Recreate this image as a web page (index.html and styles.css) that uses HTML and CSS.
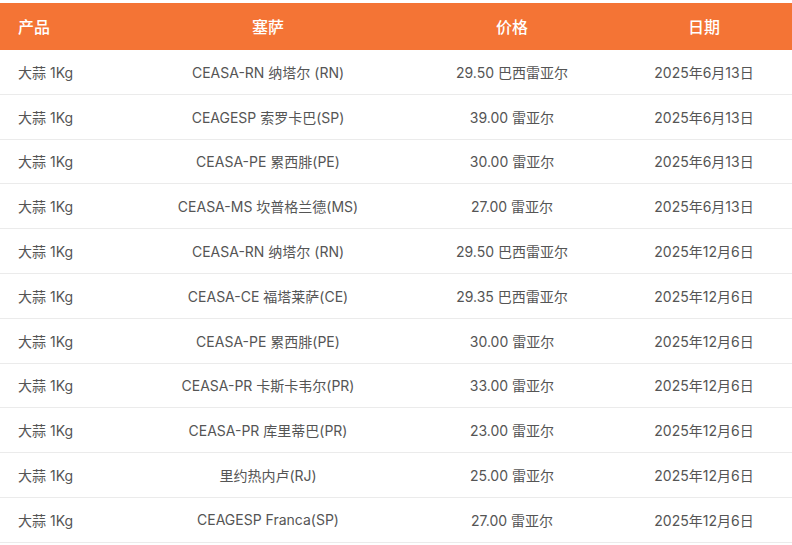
FILE: index.html
```html
<!DOCTYPE html>
<html lang="zh">
<head>
<meta charset="utf-8">
<link rel="stylesheet" href="styles.css">
</head>
<body>
<table class="prices">
  <colgroup>
    <col class="c1"><col class="c2"><col class="c3"><col class="c4">
  </colgroup>
  <thead>
    <tr><th class="left">产品</th><th>塞萨</th><th>价格</th><th>日期</th></tr>
  </thead>
  <tbody>
    <tr><td class="left">大蒜 1Kg</td><td>CEASA-RN 纳塔尔 (RN)</td><td>29.50 巴西雷亚尔</td><td>2025年6月13日</td></tr>
    <tr><td class="left">大蒜 1Kg</td><td>CEAGESP 索罗卡巴(SP)</td><td>39.00 雷亚尔</td><td>2025年6月13日</td></tr>
    <tr><td class="left">大蒜 1Kg</td><td>CEASA-PE 累西腓(PE)</td><td>30.00 雷亚尔</td><td>2025年6月13日</td></tr>
    <tr><td class="left">大蒜 1Kg</td><td>CEASA-MS 坎普格兰德(MS)</td><td>27.00 雷亚尔</td><td>2025年6月13日</td></tr>
    <tr><td class="left">大蒜 1Kg</td><td>CEASA-RN 纳塔尔 (RN)</td><td>29.50 巴西雷亚尔</td><td>2025年12月6日</td></tr>
    <tr><td class="left">大蒜 1Kg</td><td>CEASA-CE 福塔莱萨(CE)</td><td>29.35 巴西雷亚尔</td><td>2025年12月6日</td></tr>
    <tr><td class="left">大蒜 1Kg</td><td>CEASA-PE 累西腓(PE)</td><td>30.00 雷亚尔</td><td>2025年12月6日</td></tr>
    <tr><td class="left">大蒜 1Kg</td><td>CEASA-PR 卡斯卡韦尔(PR)</td><td>33.00 雷亚尔</td><td>2025年12月6日</td></tr>
    <tr><td class="left">大蒜 1Kg</td><td>CEASA-PR 库里蒂巴(PR)</td><td>23.00 雷亚尔</td><td>2025年12月6日</td></tr>
    <tr><td class="left">大蒜 1Kg</td><td>里约热内卢(RJ)</td><td>25.00 雷亚尔</td><td>2025年12月6日</td></tr>
    <tr><td class="left">大蒜 1Kg</td><td>CEAGESP Franca(SP)</td><td>27.00 雷亚尔</td><td>2025年12月6日</td></tr>
  </tbody>
</table>
</body>
</html>
```
FILE: styles.css
```css
html, body {
  margin: 0;
  padding: 0;
  background: #ffffff;
}
body {
  padding-top: 3px;
  font-family: Inter, "Noto Sans CJK SC", sans-serif;
}
.prices {
  width: 792px;
  border-collapse: collapse;
  table-layout: fixed;
}
.c1 { width: 128px; }
.c2 { width: 280px; }
.c3 { width: 208px; }
.c4 { width: 176px; }
.prices th {
  background: #f47435;
  color: #ffffff;
  font-size: 16px;
  font-weight: 500;
  height: 46.5px;
  padding: 0 18px;
  text-align: center;
  box-sizing: border-box;
}
.prices td {
  color: #555555;
  font-size: 14px;
  height: 44.8px;
  padding: 0 18px;
  text-align: center;
  border-bottom: 1px solid #ebebeb;
  box-sizing: border-box;
  white-space: nowrap;
}
.prices .left {
  text-align: left;
}
```
